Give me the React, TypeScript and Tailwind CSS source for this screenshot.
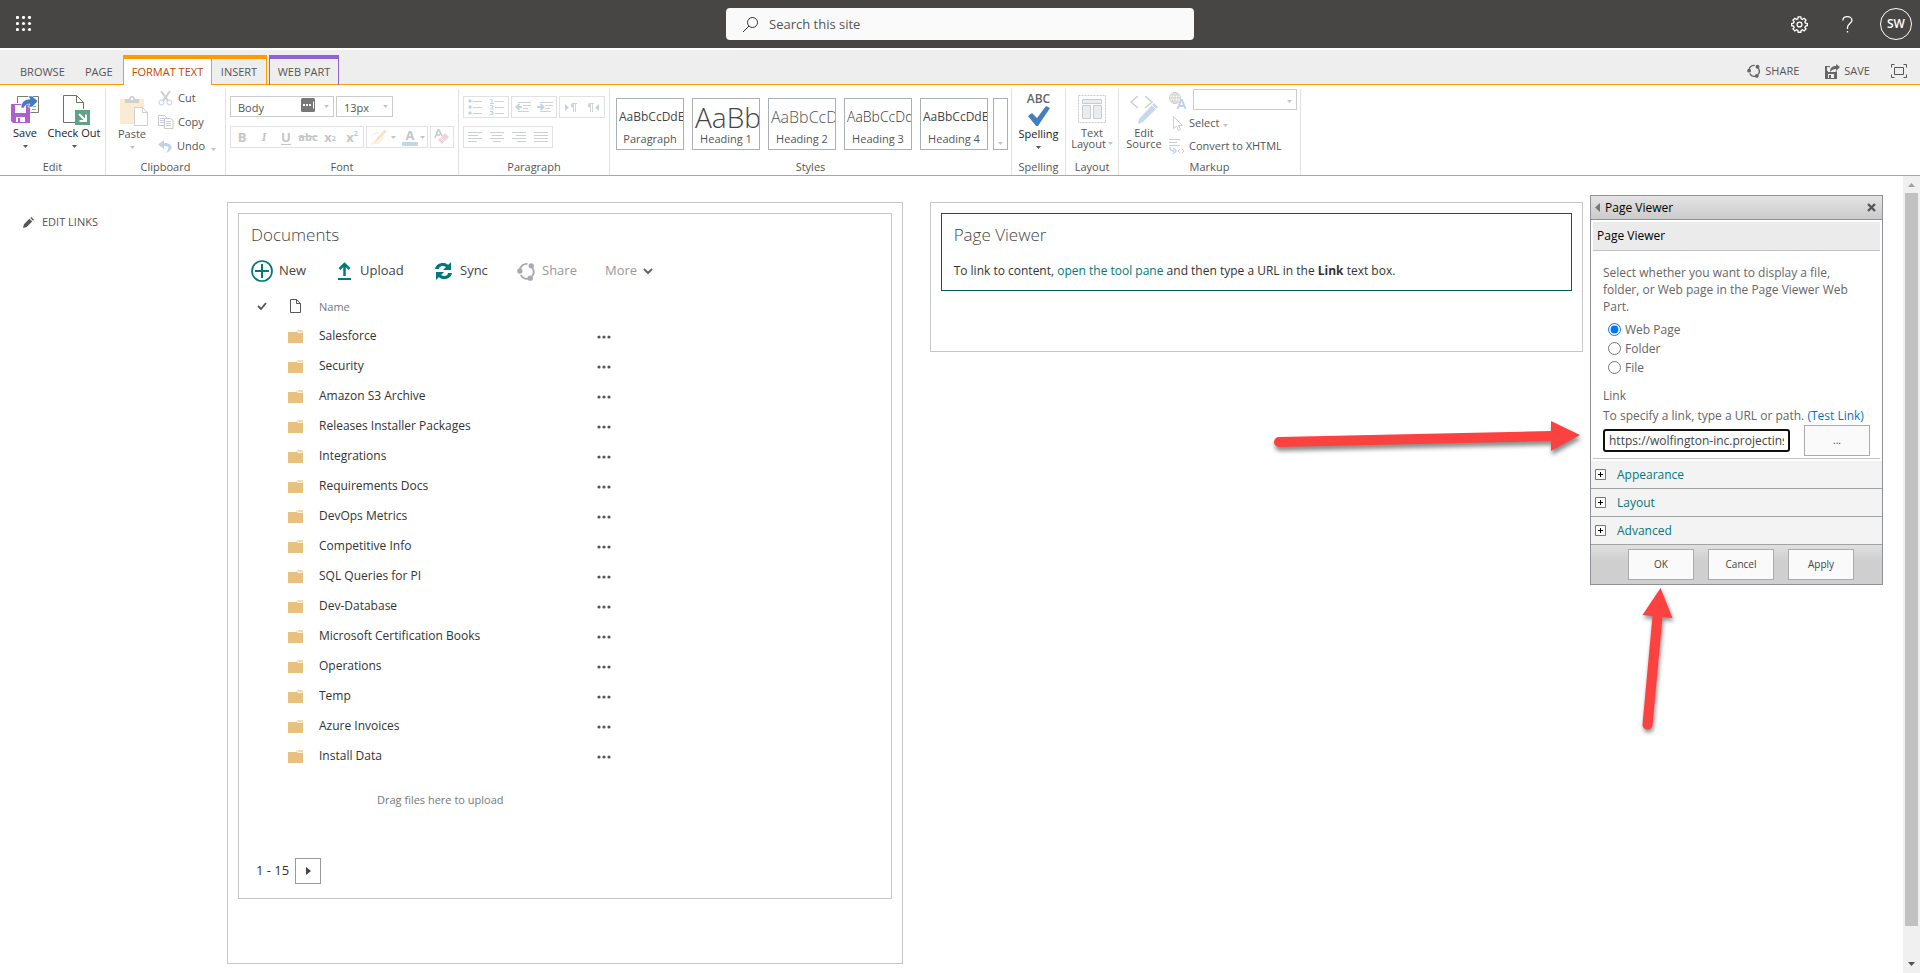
import React from "react";
import type { ReactNode } from "react";

const FOLDERS = [
  "Salesforce",
  "Security",
  "Amazon S3 Archive",
  "Releases Installer Packages",
  "Integrations",
  "Requirements Docs",
  "DevOps Metrics",
  "Competitive Info",
  "SQL Queries for PI",
  "Dev-Database",
  "Microsoft Certification Books",
  "Operations",
  "Temp",
  "Azure Invoices",
  "Install Data",
];

const STYLES = [
  { name: "Paragraph", sample: "AaBbCcDdEe", className: "text-[12px] text-[#444]" },
  { name: "Heading 1", sample: "AaBbCc", className: "text-[28px] font-light text-[#444]" },
  { name: "Heading 2", sample: "AaBbCcDd", className: "text-[16px] font-light text-[#555]" },
  { name: "Heading 3", sample: "AaBbCcDd", className: "text-[14px] font-light text-[#333]" },
  { name: "Heading 4", sample: "AaBbCcDdEe", className: "text-[12px] text-[#444]" },
];

interface CaretProps {
  dark?: boolean;
  className?: string;
}

const Caret = ({ dark = false, className = "" }: CaretProps) => (
  <svg
    width="5"
    height="3"
    viewBox="0 0 5 3"
    className={`shrink-0 ${dark ? "text-[#555]" : "text-[#c4c4c4]"} ${className}`}
    aria-hidden="true"
  >
    <path d="M0 0h5L2.5 3z" fill="currentColor" />
  </svg>
);

const SaveIcon = () => (
  <svg width="28" height="28" viewBox="0 0 28 28" fill="none" aria-hidden="true">
    <path d="M6.5 8V1.5h21v16h-8" stroke="#7a7d6c" />
    <path d="M21 11.5h4M21 14.5h4" stroke="#a0a0a0" />
    <path d="M0 9h19v19H2l-2-2z" fill="#b15fcf" />
    <path d="M4 10h11v8H4z" fill="#fff" />
    <path d="M5 22h9v5H5z" fill="#fff" />
    <path d="M7 23h2v4H7z" fill="#b15fcf" />
    <path d="M10 13c0-6 4-9 9-9l-2-3h4l6 5-6 6h-4l2-3c-3 0-5 1-6 4z" fill="#3f7fbf" stroke="#fff" strokeWidth=".6" />
  </svg>
);

const CheckOutIcon = () => (
  <svg width="28" height="30" viewBox="0 0 28 30" fill="none" aria-hidden="true">
    <path d="M12 27.500H.5V.5h13l7 7V14" stroke="#6f6f62" />
    <path d="M13.500.5v7h7" stroke="#6f6f62" />
    <path d="M12 15h15v15H12z" fill="#5fa287" />
    <path d="M16 19l7 7m0-6.500V26h-6.500" stroke="#fff" strokeWidth="2" />
  </svg>
);

const PasteIcon = () => (
  <svg width="28" height="30" viewBox="0 0 28 30" fill="none" aria-hidden="true">
    <path d="M0 3h24v25H0z" fill="#faecd2" />
    <path d="M5 7V3h4a3 3 0 0 1 6 0h4v4z" fill="#d0d0d0" />
    <circle cx="12" cy="3" r="1.200" fill="#fff" />
    <path d="M14.500 11.500h8l5 5v13h-13z" fill="#fff" stroke="#d0d0d0" />
    <path d="M22.500 11.500v5h5" stroke="#d0d0d0" />
  </svg>
);

const CutIcon = () => (
  <svg width="16" height="15" viewBox="0 0 16 15" fill="none" aria-hidden="true">
    <path d="M3 0l7 10M12 0L5 10" stroke="#cfcfcf" strokeWidth="2" />
    <circle cx="3.500" cy="11.500" r="2.500" stroke="#bcd0e6" />
    <circle cx="11.500" cy="11.500" r="2.500" stroke="#bcd0e6" />
  </svg>
);

const CopyIcon = () => (
  <svg width="16" height="14" viewBox="0 0 16 14" fill="none" stroke="#c9c9c9" aria-hidden="true">
    <path d="M.5.5h6l2 2v8h-8z" />
    <path d="M2 3.500h4M2 5.500h4M2 7.500h4" stroke="#bcd0e6" />
    <path d="M6.500 3.500h6l2.500 2v8H6.500z" fill="#fff" />
    <path d="M8 6.500h5M8 8.500h5M8 10.500h5" stroke="#bcd0e6" />
  </svg>
);

const UndoIcon = () => (
  <svg width="15" height="13" viewBox="0 0 15 13" fill="none" aria-hidden="true">
    <path d="M6 0L0 4.500 6 9V6c5-.5 6 2 2 7 8-3 7.500-10-2-10z" fill="#bfd2ea" />
  </svg>
);

const BulletsIcon = () => (
  <svg width="14" height="16" viewBox="0 0 14 16" aria-hidden="true">
    <g fill="#c2d3e8">
      <circle cx="2" cy="2" r="1.700" />
      <circle cx="2" cy="8" r="1.700" />
      <circle cx="2" cy="14" r="1.700" />
    </g>
    <path d="M5 2.500h9M5 8.500h9M5 14.500h9" stroke="#cfd3d3" />
  </svg>
);

const NumberingIcon = () => (
  <svg width="14" height="16" viewBox="0 0 14 16" fill="none" aria-hidden="true">
    <path d="M.5.5h1.500v4M0 4.500h4M0 6.500h3v1.500L.5 10h3M0 12.500h3v3H0m1-1.500h2" stroke="#c2d3e8" />
    <path d="M5 2.500h9M5 8.500h9M5 14.500h9" stroke="#cfd3d3" />
  </svg>
);

const IndentIcon = ({ outdent = false }: { outdent?: boolean }) => (
  <svg width="16" height="11" viewBox="0 0 16 11" fill="none" aria-hidden="true">
    <path d="M3 .5h13M8 3.500h8M8 6.500h5M3 9.500h11" stroke="#cfd3d3" />
    <path d={outdent ? "M7 5H2M4.500 2L1.500 5l3 3" : "M0 5h5M3.500 2l3 3-3 3"} stroke="#c2d3e8" strokeWidth="2" />
  </svg>
);

const DirectionIcon = ({ rtl = false }: { rtl?: boolean }) => (
  <svg width="12" height="9" viewBox="0 0 12 9" aria-hidden="true">
    <path d={rtl ? "M12 1v7L8 4.500z" : "M0 1v7l4-3.500z"} fill="#c2d3e8" />
    <path
      d={rtl ? "M7 0H3a2.300 2.300 0 0 0 0 4.600V9h1V1h1v8h1V1h1z" : "M12 0H8a2.300 2.300 0 0 0 0 4.600V9h1V1h1v8h1V1h1z"}
      fill="#cfd3d3"
    />
  </svg>
);

const AlignIcon = ({ d }: { d: string }) => (
  <svg width="14" height="11" viewBox="0 0 14 11" stroke="#cdd0d0" aria-hidden="true">
    <path d={d} />
  </svg>
);

const HighlightIcon = () => (
  <svg width="16" height="16" viewBox="0 0 16 16" fill="none" aria-hidden="true">
    <path d="M14.500 1.500L6 11" stroke="#fbe0c8" strokeWidth="3" />
    <path d="M5 10l2 2-4 2z" fill="#fbe0c8" />
    <path d="M1 7c1-3 5-4 7-3M1 12c2 3 9 3 11-4M0 15l8-1" stroke="#fcebdc" strokeWidth="1.200" />
  </svg>
);

const ShareIcon = ({ size, color }: { size: number; color: string }) => (
  <svg width={size} height={size} viewBox="0 0 20 20" fill="none" aria-hidden="true">
    <path d="M3 8a7.500 7.500 0 0 1 8-6M16 6a7.500 7.500 0 0 1 0 9M12 17.500a7.500 7.500 0 0 1-8-4" stroke={color} strokeWidth="2" />
    <circle cx="3" cy="9.500" r="2.800" fill={color} />
    <circle cx="15" cy="4" r="2.800" fill={color} />
    <circle cx="14" cy="17" r="2.800" fill={color} />
  </svg>
);

const FolderIcon = () => (
  <svg width="15" height="13" viewBox="0 0 15 13" aria-hidden="true">
    <path d="M0 2h8l2-2h5v13H0z" fill="#e9c17f" />
    <path d="M9.500 2.500h5M9 2l1-1h5" stroke="#fff" strokeWidth=".8" fill="none" />
  </svg>
);

interface RibbonGroupProps {
  label: string;
  className: string;
  children: ReactNode;
}

const RibbonGroup = ({ label, className, children }: RibbonGroupProps) => (
  <section className={`mt-1 flex shrink-0 flex-col border-r border-[#e1e1e1] ${className}`}>
    <div className="h-[70px]">{children}</div>
    <h2 className="text-center text-[11px] leading-4 text-[#555]">{label}</h2>
  </section>
);

const ToolBox = ({ className, children }: { className: string; children: ReactNode }) => (
  <div className={`flex h-[22px] items-center border border-[#e1e1e1] ${className}`}>{children}</div>
);

const ToolButton = ({ label, children }: { label: string; children: ReactNode }) => (
  <button type="button" aria-label={label} className="flex h-5 w-[22px] items-center justify-center">
    {children}
  </button>
);

const SuiteBar = () => (
  <header className="flex h-12 items-center bg-[#484644]">
    <div className="flex flex-1 items-center">
      <button type="button" aria-label="App launcher" className="ml-4">
        <svg width="16" height="16" viewBox="0 0 16 16" fill="#fff" aria-hidden="true">
          {[1.5, 7.5, 13.5].map((y) =>
            [1.5, 7.5, 13.5].map((x) => <circle key={`${x}-${y}`} cx={x} cy={y} r="1.600" />),
          )}
        </svg>
      </button>
    </div>
    <label className="flex h-8 w-[468px] items-center rounded-sm bg-[#fafafa]">
      <svg width="17" height="17" viewBox="0 0 17 17" fill="none" stroke="#333" className="ml-4" aria-hidden="true">
        <circle cx="10.500" cy="6.500" r="5" />
        <path d="M7 10L1 16" />
      </svg>
      <input
        type="search"
        aria-label="Search this site"
        placeholder="Search this site"
        className="ml-2.5 min-w-0 flex-1 pt-0.5 text-[13px] outline-none placeholder:text-[#555]"
      />
    </label>
    <div className="flex flex-1 items-center justify-end">
      <button type="button" aria-label="Settings" className="mr-[34px]">
        <svg width="17" height="17" viewBox="0 0 18 18" fill="none" stroke="#fff" strokeWidth="1.400" aria-hidden="true">
          <path d="M7.600 1h2.800l.4 2 1.400.6 1.700-1.200 2 2-1.200 1.700.6 1.400 2 .4v2.400l-2 .4-.6 1.400 1.200 1.700-2 2-1.700-1.200-1.400.6-.4 2H7.600l-.4-2-1.400-.6-1.700 1.200-2-2 1.200-1.700-.6-1.400-2-.4V7.900l2-.4.6-1.400-1.200-1.700 2-2 1.700 1.200L7.200 3z" />
          <circle cx="9" cy="9" r="2.600" />
        </svg>
      </button>
      <button type="button" aria-label="Help" className="mr-[27px]">
        <svg width="11" height="17" viewBox="0 0 11 17" fill="none" stroke="#fff" strokeWidth="1.300" aria-hidden="true">
          <path d="M.8 4.500C1 2 3 .7 5.500.7S10 2.200 10 4.300c0 3-4.500 3.700-4.500 7V13M5.500 15v1.600" />
        </svg>
      </button>
      <button
        type="button"
        className="mr-2 flex h-8 w-8 items-center justify-center rounded-full border border-white text-[12px] font-semibold text-white"
      >
        SW
      </button>
    </div>
  </header>
);

const TabBar = () => (
  <nav className="mt-0.5 flex h-[35px] items-end border-b border-[#ff9b00] bg-[#eee] text-[11px] leading-[26px] text-[#555]">
    <a href="#browse" className="ml-5 h-[25px] w-[65px]">
      BROWSE
    </a>
    <a href="#page" className="h-[25px] w-[38px]">
      PAGE
    </a>
    <a
      href="#format"
      className="-mb-px h-[30px] w-[89px] border-x border-t-4 border-[#ff9b00] bg-white text-center text-[#c14a00]"
    >
      FORMAT TEXT
    </a>
    <a href="#insert" className="h-[29px] w-[55px] border-r border-t-4 border-[#ff9b00] text-center">
      INSERT
    </a>
    <a href="#webpart" className="-mb-px ml-0.5 h-[30px] w-[70px] border-x border-t-4 border-[#9061d5] text-center">
      WEB PART
    </a>
    <div className="ml-auto flex h-[26px] items-center">
      <button type="button" className="flex items-center gap-1">
        <ShareIcon size={14} color="#666" />
        SHARE
      </button>
      <button type="button" className="ml-[26px] flex items-center gap-1">
        <svg width="15" height="15" viewBox="0 0 15 15" aria-hidden="true">
          <path d="M0 2h5L3 7v1h7l2-1v8H0z" fill="#666" />
          <path d="M2 3h2v4H2zM3 10h6v4H3z" fill="#eee" />
          <path d="M4 11h2v3H4z" fill="#666" />
          <path d="M5 8c0-4 2-6 6-6V0l4 3-4 4V5C8 5 7 6 5 8z" fill="#666" />
        </svg>
        SAVE
      </button>
      <button type="button" aria-label="Focus on content" className="ml-[21px] mr-[13px]">
        <svg width="16" height="14" viewBox="0 0 16 14" fill="none" stroke="#555" aria-hidden="true">
          <path d="M.5 3.500v-3h3M12.500.5h3v3M15.500 10.500v3h-3M3.500 13.500h-3v-3M3.500 3.500h9v7h-9z" />
        </svg>
      </button>
    </div>
  </nav>
);

const FontTools = () => (
  <div className="pl-1">
    <div className="flex gap-0.5 pt-[7px] text-[11px] text-[#555]">
      <div className="flex h-[21px] w-[104px] items-center border border-[#ccc] pr-1">
        <input aria-label="Font" defaultValue="Body" className="w-[70px] pl-[7px] pt-0.5 outline-none" />
        <svg width="14" height="14" viewBox="0 0 14 14" className="mb-1 shrink-0" aria-hidden="true">
          <rect width="14" height="14" rx="1.500" fill="#777" />
          <path d="M2 6h2v2H2zM5 6h2v2H5zM8 6h2v2H8z" fill="#fff" />
          <path d="M12.500 3.500v7" stroke="#fff" />
        </svg>
        <Caret className="ml-auto" />
      </div>
      <div className="flex h-[21px] w-[57px] items-center border border-[#ccc] pr-1">
        <input aria-label="Font size" defaultValue="13px" className="w-10 pl-[7px] pt-0.5 outline-none" />
        <Caret className="ml-auto" />
      </div>
    </div>
    <div className="mt-[9px] flex gap-0.5 text-[13px] font-bold text-[#c4c6ca]">
      <ToolBox className="w-[134px]">
        <ToolButton label="Bold">B</ToolButton>
        <ToolButton label="Italic">
          <span className="font-['Liberation_Serif'] italic">I</span>
        </ToolButton>
        <ToolButton label="Underline">
          <span className="underline underline-offset-2">U</span>
        </ToolButton>
        <ToolButton label="Strikethrough">
          <span className="text-[11px] line-through">abc</span>
        </ToolButton>
        <ToolButton label="Subscript">
          x<sub className="text-[7px] text-[#b5cbe2]">2</sub>
        </ToolButton>
        <ToolButton label="Superscript">
          x<sup className="text-[7px] text-[#b5cbe2]">2</sup>
        </ToolButton>
      </ToolBox>
      <ToolBox className="w-[62px] gap-0.5 pl-1">
        <button type="button" aria-label="Highlight" className="flex items-center gap-1">
          <HighlightIcon />
          <Caret />
        </button>
        <button type="button" aria-label="Font colour" className="ml-1 flex items-center gap-0.5">
          <span className="w-4 border-b-4 border-[#c3d5ea] text-center leading-[14px]">A</span>
          <Caret />
        </button>
      </ToolBox>
      <ToolBox className="w-6">
        <button type="button" aria-label="Clear format" className="flex h-5 w-[22px] items-center justify-center">
          <svg width="16" height="16" viewBox="0 0 16 16" fill="none" aria-hidden="true">
            <path d="M1 9l3-8h1l3 6M2 6h4" stroke="#c8c8c8" strokeWidth="1.600" />
            <path d="M11 4l4 4-7 7-4-4z" fill="#f0d5dc" />
            <path d="M6.500 8.500l4 4" stroke="#fff" />
          </svg>
        </button>
      </ToolBox>
    </div>
  </div>
);

const ParagraphTools = () => (
  <div className="pl-1 pt-[7px]">
    <div className="flex gap-0.5">
      <ToolBox className="w-[46px]">
        <ToolButton label="Bullets">
          <BulletsIcon />
        </ToolButton>
        <ToolButton label="Numbering">
          <NumberingIcon />
        </ToolButton>
      </ToolBox>
      <ToolBox className="w-[46px]">
        <ToolButton label="Outdent">
          <IndentIcon outdent />
        </ToolButton>
        <ToolButton label="Indent">
          <IndentIcon />
        </ToolButton>
      </ToolBox>
      <ToolBox className="w-[46px]">
        <ToolButton label="Left to right">
          <DirectionIcon />
        </ToolButton>
        <ToolButton label="Right to left">
          <DirectionIcon rtl />
        </ToolButton>
      </ToolBox>
    </div>
    <div className="mt-2 flex">
      <ToolBox className="w-[90px]">
        <ToolButton label="Align left">
          <AlignIcon d="M0 .5h14M0 3.500h10M0 6.500h14M0 9.500h9" />
        </ToolButton>
        <ToolButton label="Centre">
          <AlignIcon d="M0 .5h14M2 3.500h10M0 6.500h14M3 9.500h8" />
        </ToolButton>
        <ToolButton label="Align right">
          <AlignIcon d="M0 .5h14M4 3.500h10M0 6.500h14M5 9.500h9" />
        </ToolButton>
        <ToolButton label="Justify">
          <AlignIcon d="M0 .5h14M0 3.500h14M0 6.500h14M0 9.500h14" />
        </ToolButton>
      </ToolBox>
    </div>
  </div>
);

const Ribbon = () => (
  <div className="flex h-[91px] overflow-hidden border-b border-[#ff9b00] text-[11px] leading-4 text-[#555]">
    <RibbonGroup label="Edit" className="w-[106px]">
      <div className="flex pt-1.5 text-[#222]">
        <button type="button" className="ml-1.5 flex w-[38px] flex-col items-center">
          <span className="flex h-[30px]">
            <SaveIcon />
          </span>
          Save
          <Caret dark className="mt-1" />
        </button>
        <button type="button" className="flex w-[60px] flex-col items-center">
          <span className="flex h-[30px] pl-1.5">
            <CheckOutIcon />
          </span>
          Check Out
          <Caret dark className="mt-1" />
        </button>
      </div>
    </RibbonGroup>

    <RibbonGroup label="Clipboard" className="w-[120px]">
      <div className="flex">
        <button type="button" className="ml-2 flex w-9 flex-col items-center pt-[7px]">
          <span className="flex h-[30px] pl-1">
            <PasteIcon />
          </span>
          Paste
          <Caret className="mt-1" />
        </button>
        <div className="ml-2 flex flex-col gap-2 pt-px">
          <button type="button" className="flex items-center gap-1">
            <CutIcon />
            Cut
          </button>
          <button type="button" className="flex items-center gap-1">
            <CopyIcon />
            Copy
          </button>
          <button type="button" className="flex items-center gap-1">
            <UndoIcon />
            Undo
            <Caret className="ml-0.5 mt-1.5" />
          </button>
        </div>
      </div>
    </RibbonGroup>

    <RibbonGroup label="Font" className="w-[233px]">
      <FontTools />
    </RibbonGroup>

    <RibbonGroup label="Paragraph" className="w-[151px]">
      <ParagraphTools />
    </RibbonGroup>

    <RibbonGroup label="Styles" className="w-[402px]">
      <div className="flex pl-1.5 pt-[9px]">
        {STYLES.map((style) => (
          <button
            key={style.name}
            type="button"
            className="mr-2 flex h-[52px] w-[68px] flex-col overflow-hidden border border-[#abb0b5]"
          >
            <span className={`flex h-8 w-full items-center overflow-hidden pl-0.5 pt-1 leading-7 ${style.className}`}>
              {style.sample}
            </span>
            <span className="w-full text-center">{style.name}</span>
          </button>
        ))}
        <button
          type="button"
          aria-label="More styles"
          className="-ml-[3px] flex h-[52px] w-[15px] items-end justify-center border border-[#abb0b5] pb-1"
        >
          <Caret />
        </button>
      </div>
    </RibbonGroup>

    <RibbonGroup label="Spelling" className="w-[54px]">
      <button type="button" className="flex w-full flex-col items-center pt-[3px] text-[#222]">
        <span className="text-[12px] font-semibold leading-[14px] text-[#666]">ABC</span>
        <svg width="24" height="20" viewBox="0 0 24 20" aria-hidden="true">
          <path d="M1 10l4-3 5 5L19 0l4 2-12 18H9z" fill="#457fbd" />
        </svg>
        Spelling
        <Caret dark className="mt-1" />
      </button>
    </RibbonGroup>

    <RibbonGroup label="Layout" className="w-[53px]">
      <button type="button" className="flex w-full flex-col items-center pt-1.5 leading-[11px]">
        <svg width="28" height="28" viewBox="0 0 28 28" fill="none" aria-hidden="true">
          <path d="M.5.500h27v27H.5z" stroke="#cbcbcb" strokeDasharray="2 1" />
          <g fill="#e9edf2" stroke="#cbcbcb">
            <path d="M4.500 4.500h19v4h-19zM4.500 10.500h8v13h-8zM15.500 10.500h8v13h-8z" />
          </g>
        </svg>
        <span className="mt-1">Text</span>
        <span className="flex items-center gap-0.5">
          Layout
          <Caret />
        </span>
      </button>
    </RibbonGroup>

    <RibbonGroup label="Markup" className="w-[182px]">
      <div className="flex">
        <button type="button" className="ml-1.5 flex w-[38px] flex-col items-center pt-1.5 leading-[11px]">
          <svg width="30" height="30" viewBox="0 0 30 30" fill="none" className="-mb-0.5" aria-hidden="true">
            <path d="M9 1L2 7l7 6M16 1l7 6-7 6" stroke="#cfcfcf" strokeWidth="1.500" />
            <path d="M25 8l4 4-15 15-5 2 1-5z" fill="#c6d8ec" />
            <path d="M23 10l4 4" stroke="#fff" />
          </svg>
          <span className="mt-1">Edit</span>
          <span>Source</span>
        </button>
        <div className="ml-1.5 flex flex-1 flex-col">
          <div className="flex h-6 items-center">
            <svg width="18" height="18" viewBox="0 0 18 18" fill="none" aria-hidden="true">
              <g stroke="#cfcfcf">
                <circle cx="6" cy="6" r="5.500" />
                <path d="M0 6h11M6 0v12M1.500 3h9M1.500 9h7" />
                <ellipse cx="6" cy="6" rx="3" ry="5.500" />
              </g>
              <path d="M8.500 17L12 8h1l3.500 9M10 14h5" stroke="#bfd3ea" strokeWidth="2" />
            </svg>
            <select
              aria-label="Language"
              className="mb-1 ml-1.5 h-[21px] w-[104px] appearance-none border border-[#ccc] bg-white"
            />
            <Caret className="-ml-2.5" />
          </div>
          <button type="button" className="mt-0.5 flex items-center text-left">
            <span className="flex w-5 pl-1">
              <svg width="10" height="15" viewBox="0 0 10 15" fill="none" stroke="#cfcfcf" aria-hidden="true">
                <path d="M.5.500v12L3.500 10l2 4.500 2-1-2-4h4z" />
              </svg>
            </span>
            Select
            <Caret className="ml-1 mt-1" />
          </button>
          <button type="button" className="mt-[7px] flex items-center whitespace-nowrap text-left">
            <span className="flex w-5">
              <svg width="16" height="15" viewBox="0 0 16 15" fill="none" aria-hidden="true">
                <path d="M0 .5h11M0 3.500h8M0 6.500h11" stroke="#cfcfcf" />
                <path d="M1 8c0 3 1 4 4 4M4 9l3 3-3 3" stroke="#bfd3ea" strokeWidth="1.500" />
                <path d="M11 10l-2 2 2 2M13 10l2 2-2 2" stroke="#cfcfcf" />
              </svg>
            </span>
            Convert to XHTML
          </button>
        </div>
      </div>
    </RibbonGroup>
  </div>
);

const DocumentsPart = () => (
  <section className="border border-[#c6c6c6] pb-3.5 pl-3 pt-2">
    <h2 className="text-[17px] font-light leading-[26px] text-[#444]">Documents</h2>
    <div className="mt-[11px] flex h-6 items-center text-[13px] text-[#444]">
      <button type="button" className="flex w-[86px] items-center gap-1.5">
        <svg width="22" height="22" viewBox="0 0 22 22" fill="none" stroke="#03787c" strokeWidth="2" aria-hidden="true">
          <circle cx="11" cy="11" r="10" strokeWidth="1.700" />
          <path d="M11 4v14M4 11h14" />
        </svg>
        New
      </button>
      <button type="button" className="flex w-[98px] items-center gap-2">
        <svg width="15" height="18" viewBox="0 0 15 18" fill="none" stroke="#03787c" aria-hidden="true">
          <path d="M7.500 14V2M2.500 7l5-5 5 5" strokeWidth="2.500" />
          <path d="M1 17h13" strokeWidth="2" />
        </svg>
        Upload
      </button>
      <button type="button" className="flex w-[82px] items-center gap-2">
        <svg width="17" height="18" viewBox="0 0 17 18" aria-hidden="true">
          <path d="M0 7C1 3 4 1 8 1c2 0 4 .5 5 2l3-3v8H8l3-3C8 3 4 4 4 7zM17 11c-1 4-4 6-8 6-2 0-4-.5-5-2l-3 3v-8h8l-3 3c3 2 7 1 7-2z" fill="#03787c" />
        </svg>
        Sync
      </button>
      <button type="button" className="flex w-[88px] items-center gap-1.5 text-[#999]">
        <ShareIcon size={19} color="#aaa" />
        Share
      </button>
      <button type="button" className="flex items-center gap-1.5 text-[#999]">
        More
        <svg width="10" height="7" viewBox="0 0 10 7" fill="none" stroke="#666" strokeWidth="2" aria-hidden="true">
          <path d="M1 1l4 4 4-4" />
        </svg>
      </button>
    </div>

    <table className="mt-2 text-left">
      <thead>
        <tr className="h-[30px] text-[11px] text-[#777]">
          <th className="w-[37px] pl-1.5">
            <svg width="10" height="8" viewBox="0 0 10 8" fill="none" stroke="#555" strokeWidth="1.800" role="img" aria-label="Selected">
              <path d="M1 4l3 3 5-6" />
            </svg>
          </th>
          <th className="w-[31px] pl-0.5">
            <svg width="11" height="14" viewBox="0 0 11 14" fill="none" stroke="#555" role="img" aria-label="Type">
              <path d="M.5.500h6l4 4v9H.5zM6.500.500v4h4" />
            </svg>
          </th>
          <th className="w-[278px] pt-0.5 font-normal">Name</th>
          <th className="w-5" aria-label="Actions" />
        </tr>
      </thead>
      <tbody>
        {FOLDERS.map((name) => (
          <tr key={name} className="h-[30px] text-[12px] text-[#333]">
            <td />
            <td>
              <FolderIcon />
            </td>
            <td>
              <a href="#folder">{name}</a>
            </td>
            <td className="pt-0.5">
              <button type="button" aria-label={`Open menu for ${name}`} className="flex">
                <svg width="14" height="4" viewBox="0 0 14 4" fill="#555" aria-hidden="true">
                  <circle cx="2" cy="2" r="1.600" />
                  <circle cx="7" cy="2" r="1.600" />
                  <circle cx="12" cy="2" r="1.600" />
                </svg>
              </button>
            </td>
          </tr>
        ))}
      </tbody>
    </table>

    <p className="ml-[126px] mt-[19px] text-[11px] leading-5 text-[#777]">Drag files here to upload</p>
    <div className="mt-12 flex items-center gap-1.5 pl-[5px] text-[13px] text-[#333]">
      1 - 15
      <button type="button" aria-label="Next page" className="flex h-[26px] w-[26px] items-center justify-center border border-[#999]">
        <svg width="5" height="8" viewBox="0 0 5 8" aria-hidden="true">
          <path d="M0 0l5 4-5 4z" fill="#444" />
        </svg>
      </button>
    </div>
  </section>
);

const ViewerPart = () => (
  <section className="border border-[#005e5d] px-3 pb-[9px] pt-2">
    <h2 className="text-[17px] font-light leading-[26px] text-[#444]">Page Viewer</h2>
    <p className="mt-[13px] text-[12px] leading-5 text-[#333]">
      To link to content,{" "}
      <a href="#toolpane" className="text-[#03787c]">
        open the tool pane
      </a>{" "}
      and then type a URL in the <b>Link</b> text box.
    </p>
  </section>
);

const PANE_BUTTON = "h-[31px] w-[66px] border border-[#ababab] bg-[#fafafa] text-[10px] text-[#444]";

const ToolPane = () => (
  <aside className="relative ml-[7px] mt-[19px] w-[293px] shrink-0 self-start border border-[#8e9296] text-[12px] text-[#666]">
    <div className="flex h-6 items-center border-b border-[#8e9296] bg-linear-to-b from-[#e4e4e4] to-[#cbcbcb] pl-1 pr-1.5 text-black">
      <svg width="5" height="9" viewBox="0 0 5 9" className="mr-[5px]" aria-hidden="true">
        <path d="M5 0v9L0 4.500z" fill="#777" />
      </svg>
      Page Viewer
      <button type="button" aria-label="Close" className="ml-auto">
        <svg width="9" height="9" viewBox="0 0 9 9" stroke="#555" strokeWidth="2.400" aria-hidden="true">
          <path d="M1 1l7 7M8 1L1 8" />
        </svg>
      </button>
    </div>

    <div className="mx-0.5 mt-0.5 border-b border-[#c3c3c3]">
      <h3 className="border-b border-[#c3c3c3] bg-[#ebebeb] pl-1 leading-7 text-black">Page Viewer</h3>
      <div className="pb-0.5 pl-2.5">
        <p className="pr-5 pt-[13px] leading-[17px]">
          Select whether you want to display a file, folder, or Web page in the Page Viewer Web Part.
        </p>
        <fieldset className="mt-[5px] pl-[5px]">
          {["Web Page", "Folder", "File"].map((kind, index) => (
            <label key={kind} className="flex h-[19px] items-center gap-1">
              <input type="radio" name="kind" defaultChecked={index === 0} className="h-[13px] w-[13px]" />
              {kind}
            </label>
          ))}
        </fieldset>
        <label htmlFor="link" className="mt-2.5 block leading-[17px]">
          Link
        </label>
        <p className="mt-[3px] whitespace-nowrap leading-[17px]">
          To specify a link, type a URL or path.{" "}
          <a href="#test" className="text-[#0072c6]">
            (Test Link)
          </a>
        </p>
        <div className="mt-px flex items-center">
          <input
            id="link"
            defaultValue="https://wolfington-inc.projectinsight.net"
            className="h-[23px] w-[187px] rounded-[3px] border-2 border-[#101010] px-1 text-[12px] text-[#444] outline-none"
          />
          <button type="button" aria-label="Browse for link" className={`ml-3.5 ${PANE_BUTTON}`}>
            ...
          </button>
        </div>
      </div>
    </div>

    <div className="mt-0.5">
      {["Appearance", "Layout", "Advanced"].map((title) => (
        <button
          key={title}
          type="button"
          className="flex h-7 w-full items-center gap-[11px] border-b border-[#a0a3a6] bg-[#f3f3f3] pl-1 text-[#03787c]"
        >
          <svg width="11" height="11" viewBox="0 0 11 11" fill="#fff" aria-hidden="true">
            <path d="M.5.500h10v10H.5z" stroke="#777" />
            <path d="M3 5.500h5M5.500 3v5" stroke="#000" />
          </svg>
          {title}
        </button>
      ))}
    </div>

    <div className="flex h-[39px] items-center justify-end gap-3.5 bg-linear-to-b from-[#e0e0e0] to-[#cfcfcf] to-40% pr-7">
      <button type="button" className={PANE_BUTTON}>
        OK
      </button>
      <button type="button" className={PANE_BUTTON}>
        Cancel
      </button>
      <button type="button" className={PANE_BUTTON}>
        Apply
      </button>
    </div>

    {/* callout arrows over the page */}
    <svg
      width="316"
      height="50"
      viewBox="0 0 316 50"
      className="pointer-events-none absolute right-full top-[219px] mr-1 drop-shadow-[1px_4px_2px_rgba(0,0,0,0.45)]"
      aria-hidden="true"
    >
      <path d="M8 22L280 16V6l29 14-29 16V26L8 32a5 5 0 0 1 0-10z" fill="#fc4241" />
    </svg>
    <svg
      width="50"
      height="150"
      viewBox="0 0 50 150"
      className="pointer-events-none absolute left-[42px] top-full drop-shadow-[1px_3px_2px_rgba(0,0,0,0.45)]"
      aria-hidden="true"
    >
      <path d="M27.500 4l12 30-10-1-10 108a5 5 0 0 1-10-1l10-108-10-1z" fill="#fc4241" />
    </svg>
  </aside>
);

const ScrollBar = () => (
  <div className="flex w-[17px] shrink-0 flex-col items-center bg-[#f0f0f0]">
    <svg width="17" height="17" viewBox="0 0 17 17" aria-hidden="true">
      <path d="M5 11h7L8.500 7z" fill="#a0a0a0" />
    </svg>
    <div className="mb-[30px] w-[13px] flex-1 bg-[#c1c1c1]" />
    <svg width="17" height="17" viewBox="0 0 17 17" aria-hidden="true">
      <path d="M5 6h7l-3.500 4z" fill="#505050" />
    </svg>
  </div>
);

export default function App() {
  return (
    <div className="flex min-h-screen flex-col bg-white font-['Open_Sans','Noto_Sans',sans-serif]">
      <SuiteBar />
      <TabBar />
      <Ribbon />
      <div className="flex flex-1">
        <nav className="w-[227px] shrink-0 pl-[23px] pt-9 text-[11px] leading-5 text-[#555]">
          <a href="#edit" className="flex items-center gap-2">
            <svg width="11" height="11" viewBox="0 0 12 12" fill="#555" aria-hidden="true">
              <path d="M0 12l1-4 6-6 3 3-6 6zM8 1l1-1 3 3-1 1z" />
            </svg>
            EDIT LINKS
          </a>
        </nav>
        <main className="flex min-w-0 flex-1 items-start pt-[26px]">
          <div className="min-w-0 flex-[676] border border-[#c6c6c6] px-2.5 pb-16 pt-2.5">
            <DocumentsPart />
          </div>
          <div className="ml-[27px] min-w-0 flex-[653] border border-[#c6c6c6] px-2.5 pb-[60px] pt-2.5">
            <ViewerPart />
          </div>
        </main>
        <ToolPane />
        <div className="w-5 shrink-0" />
        <ScrollBar />
      </div>
    </div>
  );
}
